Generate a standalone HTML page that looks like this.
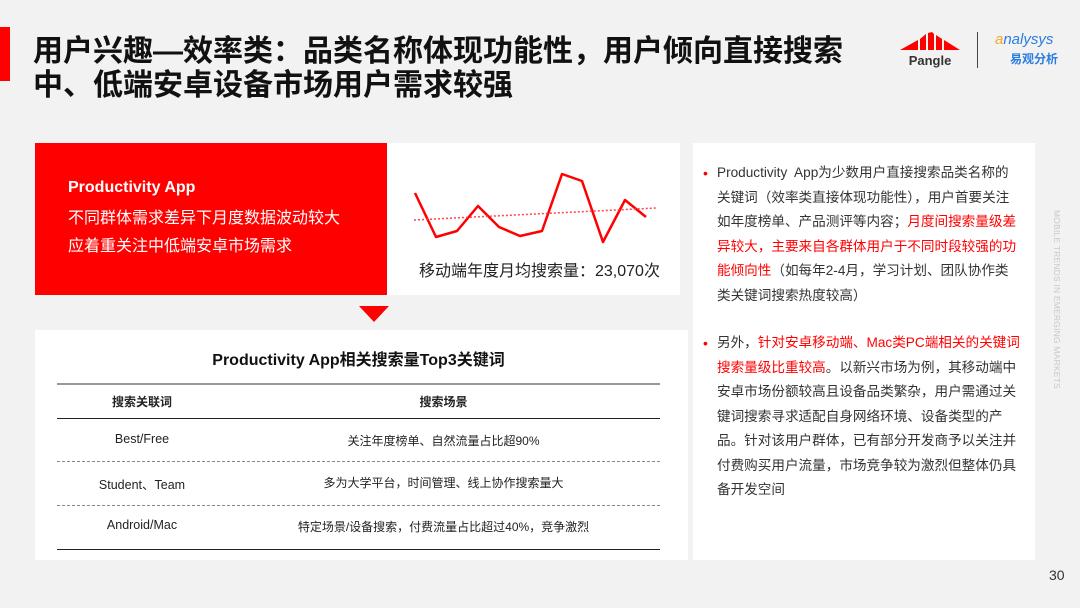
<!DOCTYPE html>
<html><head><meta charset="utf-8"><style>
*{margin:0;padding:0;box-sizing:border-box}
body{width:1080px;height:608px;background:#f2f2f2;position:relative;overflow:hidden;font-family:"Liberation Sans","Noto Sans CJK SC",sans-serif;color:#222}
.abs{position:absolute}
.title{left:33px;top:35px;font-size:30px;font-weight:bold;line-height:34px;color:#111;white-space:nowrap}
.rp{left:693px;top:143px;width:342px;height:417px;background:#fff}
.rp p{position:absolute;left:24px;width:304px;font-size:13.6px;line-height:24.5px;color:#333}
.rp .b{position:absolute;left:-14px;color:#f00;font-size:14px}
.red{color:#f00}
</style></head><body>
<div class="abs" style="left:0;top:27px;width:10px;height:54px;background:#f00"></div>
<div class="abs title">用户兴趣—效率类：品类名称体现功能性，用户倾向直接搜索<br>中、低端安卓设备市场用户需求较强</div>

<svg class="abs" style="left:898px;top:30px" width="64" height="40" viewBox="0 0 64 40">
<polygon points="2,20 20,10 20,20" fill="#f00"/>
<polygon points="22,9 28,4 28,20 22,20" fill="#f00"/>
<polygon points="30,3 34,2 36,4 36,20 30,20" fill="#f00"/>
<polygon points="38,5 44,9 44,20 38,20" fill="#f00"/>
<polygon points="46,10 62,20 46,20" fill="#f00"/>
<text x="32" y="35" text-anchor="middle" font-family="Liberation Sans" font-weight="bold" font-size="13" fill="#333">Pangle</text>
</svg>
<div class="abs" style="left:977px;top:32px;width:1px;height:36px;background:#444"></div>
<div class="abs" style="left:995px;top:31px;font-size:15px;font-style:italic;color:#2a7de1;font-family:'Liberation Sans',sans-serif"><span style="color:#f5a623">a</span>nalysys</div>
<div class="abs" style="left:1010px;top:50px;font-size:12px;color:#2a7de1;font-weight:bold">易观分析</div>

<div class="abs" style="left:35px;top:143px;width:352px;height:152px;background:#f00;color:#fff">
<div class="abs" style="left:33px;top:36px;font-size:16px;font-weight:bold">Productivity App</div>
<div class="abs" style="left:33px;top:62px;font-size:16px;line-height:28px">不同群体需求差异下月度数据波动较大<br>应着重关注中低端安卓市场需求</div>
</div>
<div class="abs" style="left:387px;top:143px;width:293px;height:152px;background:#fff"></div>
<svg class="abs" style="left:0;top:0" width="1080" height="608">
<polyline points="415,193 436,237 457,231 478,206 499,227 520,236 542,231 562,174 582,181 603,242 625,200 646,217" fill="none" stroke="#f00" stroke-width="2.5" stroke-linejoin="round"/>
<line x1="414" y1="220" x2="656" y2="208" stroke="#f44" stroke-width="1.5" stroke-dasharray="2,2"/>
<polygon points="359,306 389,306 374,322" fill="#f00"/>
</svg>
<div class="abs" style="left:419px;top:257px;font-size:16px;color:#222">移动端年度月均搜索量：23,070次</div>

<div class="abs" style="left:35px;top:330px;width:653px;height:230px;background:#fff"></div>
<div class="abs" style="left:57px;top:346px;width:603px;text-align:center;font-size:16px;font-weight:bold;color:#111">Productivity App相关搜索量Top3关键词</div>
<div class="abs" style="left:57px;top:383px;width:603px;height:2px;background:#999"></div>
<div class="abs" style="left:57px;top:418px;width:603px;height:1px;background:#222"></div>
<div class="abs" style="left:57px;top:461px;width:603px;border-top:1px dashed #888"></div>
<div class="abs" style="left:57px;top:505px;width:603px;border-top:1px dashed #888"></div>
<div class="abs" style="left:57px;top:549px;width:603px;height:1px;background:#222"></div>
<div class="abs" style="left:57px;top:393px;width:170px;text-align:center;font-size:12px;font-weight:bold">搜索关联词</div>
<div class="abs" style="left:227px;top:393px;width:433px;text-align:center;font-size:12px;font-weight:bold">搜索场景</div>
<div class="abs" style="left:57px;top:432px;width:170px;text-align:center;font-size:12.5px">Best/Free</div>
<div class="abs" style="left:227px;top:432px;width:433px;text-align:center;font-size:12px">关注年度榜单、自然流量占比超90%</div>
<div class="abs" style="left:57px;top:474px;width:170px;text-align:center;font-size:12.5px">Student、Team</div>
<div class="abs" style="left:227px;top:474px;width:433px;text-align:center;font-size:12px">多为大学平台，时间管理、线上协作搜索量大</div>
<div class="abs" style="left:57px;top:518px;width:170px;text-align:center;font-size:12.5px">Android/Mac</div>
<div class="abs" style="left:227px;top:518px;width:433px;text-align:center;font-size:12px">特定场景/设备搜索，付费流量占比超过40%，竞争激烈</div>

<div class="abs rp">
<p style="top:18px"><span class="b">•</span>Productivity&nbsp; App为少数用户直接搜索品类名称的关键词（效率类直接体现功能性），用户首要关注如年度榜单、产品测评等内容；<span class="red">月度间搜索量级差异较大，主要来自各群体用户于不同时段较强的功能倾向性</span>（如每年2-4月，学习计划、团队协作类类关键词搜索热度较高）</p>
<p style="top:188px"><span class="b">•</span>另外，<span class="red">针对安卓移动端、Mac类PC端相关的关键词搜索量级比重较高</span>。以新兴市场为例，其移动端中安卓市场份额较高且设备品类繁杂，用户需通过关键词搜索寻求适配自身网络环境、设备类型的产品。针对该用户群体，已有部分开发商予以关注并付费购买用户流量，市场竞争较为激烈但整体仍具备开发空间</p>
</div>

<div class="abs" style="left:1052px;top:210px;writing-mode:vertical-rl;font-size:8.5px;color:#c8c8c8;letter-spacing:0.2px">MOBILE TRENDS IN EMERGING MARKETS</div>
<div class="abs" style="left:1049px;top:567px;font-size:14px;color:#333">30</div>
</body></html>
